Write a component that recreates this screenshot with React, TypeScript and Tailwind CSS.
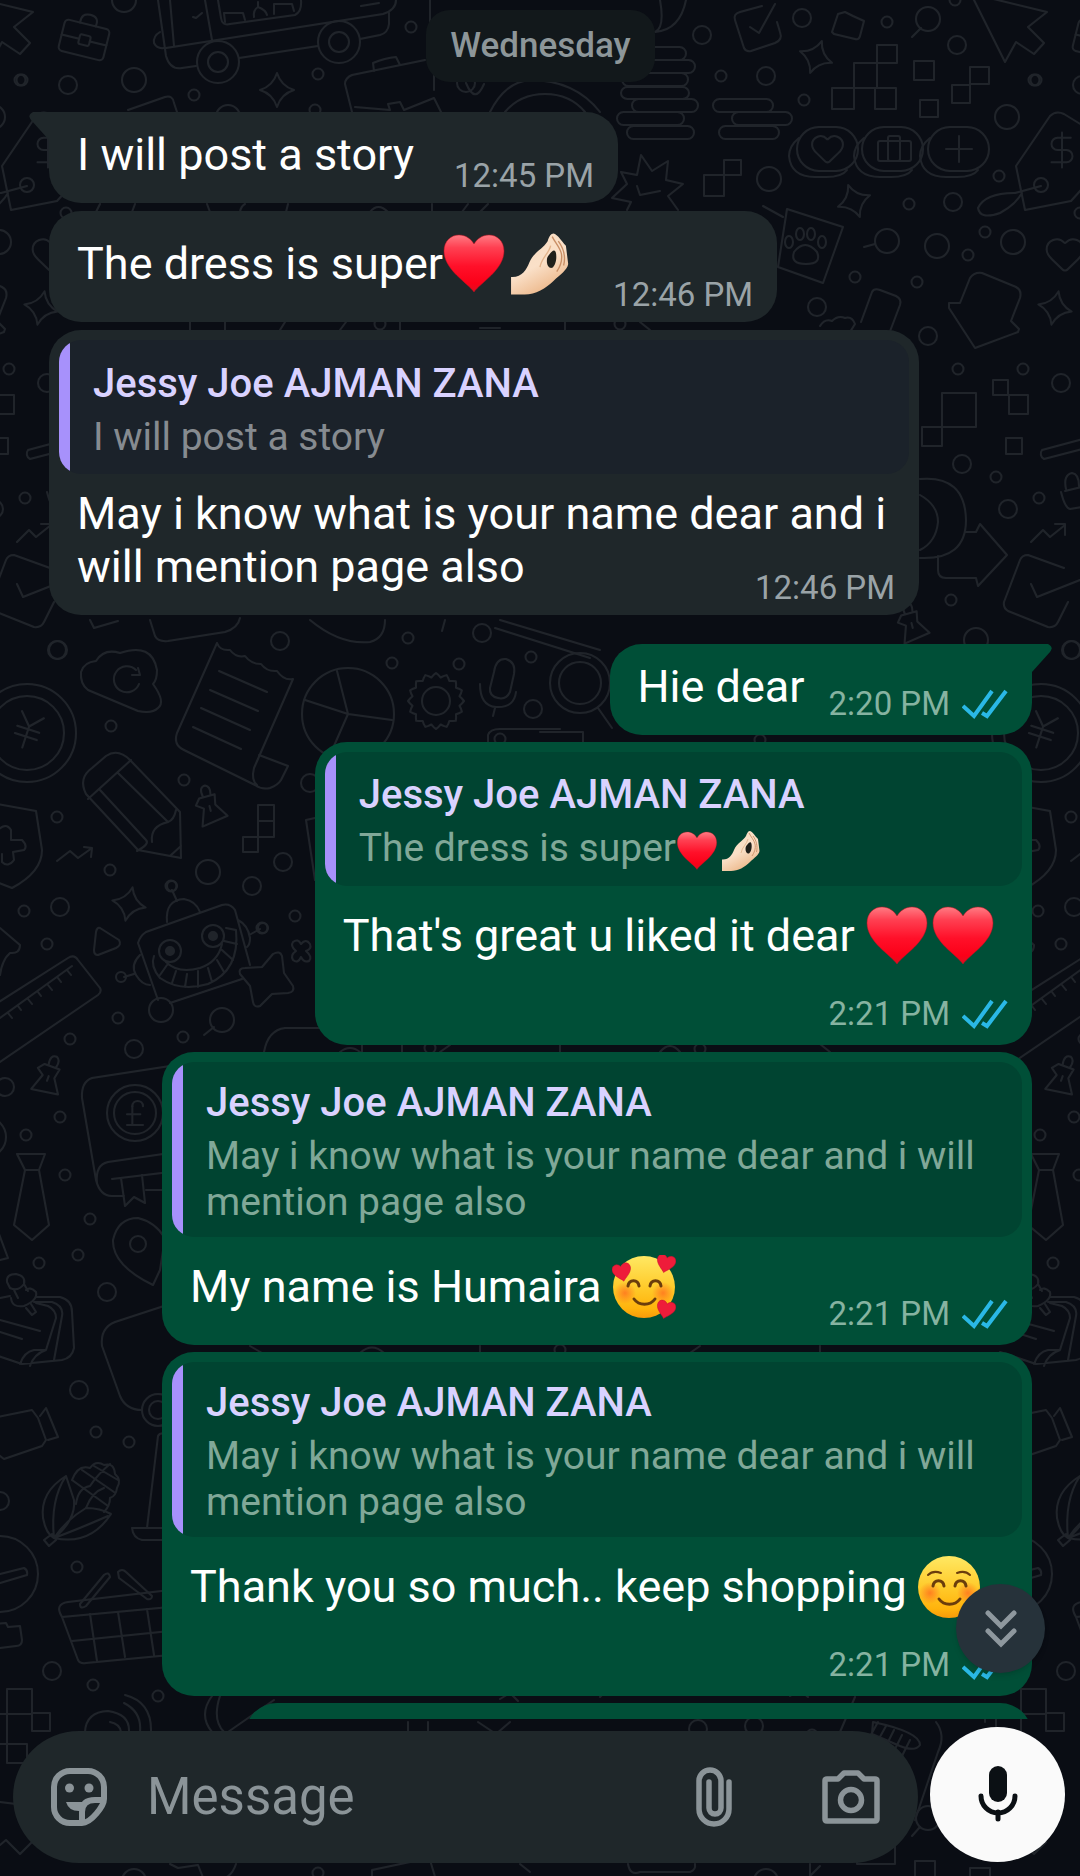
import React from 'react';
import { clsx } from 'clsx';
import { DollarSign, Heart, JapaneseYen, PoundSterling } from 'lucide-react';

type EmojiName = 'heart' | 'hand' | 'hearts-face' | 'smile';

interface Quote {
  author: string;
  text: string;
  emojis?: EmojiName[];
}

interface Message {
  id: number;
  text: string;
  time: string;
  emojis?: EmojiName[];
  quote?: Quote;
  mine?: boolean;
  tail?: boolean;
  // where the time goes: beside the text, over its last line, or on its own line
  meta: 'inline' | 'overlap' | 'below';
}

const CONTACT = 'Jessy Joe AJMAN ZANA';
const LONG_QUOTE = 'May i know what is your name dear and i will mention page also';

const received: Message[] = [
  { id: 1, text: 'I will post a story', time: '12:45 PM', tail: true, meta: 'inline' },
  { id: 2, text: 'The dress is super', emojis: ['heart', 'hand'], time: '12:46 PM', meta: 'inline' },
  {
    id: 3,
    text: 'May i know what is your name dear and i will mention page also',
    time: '12:46 PM',
    quote: { author: CONTACT, text: 'I will post a story' },
    meta: 'overlap',
  },
];

const sent: Message[] = [
  { id: 4, text: 'Hie dear', time: '2:20 PM', mine: true, tail: true, meta: 'inline' },
  {
    id: 5,
    text: "That's great u liked it dear ",
    emojis: ['heart', 'heart'],
    time: '2:21 PM',
    quote: { author: CONTACT, text: 'The dress is super', emojis: ['heart', 'hand'] },
    mine: true,
    meta: 'below',
  },
  {
    id: 6,
    text: 'My name is Humaira ',
    emojis: ['hearts-face'],
    time: '2:21 PM',
    quote: { author: CONTACT, text: LONG_QUOTE },
    mine: true,
    meta: 'overlap',
  },
  {
    id: 7,
    text: 'Thank you so much.. keep shopping ',
    emojis: ['smile'],
    time: '2:21 PM',
    quote: { author: CONTACT, text: LONG_QUOTE },
    mine: true,
    meta: 'below',
  },
];

/* ---------- Emojis ---------- */

const HEART = 'M32 60C26 51 2 38 2 19C2 9 9 3 17 3C24 3 29 7 32 12C35 7 40 3 47 3C55 3 62 9 62 19C62 38 38 51 32 60Z';

const EmojiDefs = () => (
  <svg className="absolute size-0" aria-hidden="true">
    <defs>
      <linearGradient id="heartFill" x1="0" y1="0" x2="0" y2="1">
        <stop offset="0" stopColor="#ff7c84" />
        <stop offset="0.22" stopColor="#ff4052" />
        <stop offset="0.55" stopColor="#ff1029" />
        <stop offset="0.85" stopColor="#fb0018" />
        <stop offset="1" stopColor="#dd0f20" />
      </linearGradient>
      <linearGradient id="skinFill" x1="0" y1="0" x2="0.5" y2="1">
        <stop offset="0" stopColor="#f9dcc0" />
        <stop offset="0.6" stopColor="#fae0c8" />
        <stop offset="1" stopColor="#edb98c" />
      </linearGradient>
      <linearGradient id="faceFill" x1="0" y1="0" x2="0" y2="1">
        <stop offset="0" stopColor="#ffe863" />
        <stop offset="0.5" stopColor="#ffcb2b" />
        <stop offset="0.85" stopColor="#ffb30c" />
        <stop offset="1" stopColor="#f79a0a" />
      </linearGradient>
      <radialGradient id="blush">
        <stop offset="0" stopColor="#ff6a1f" stopOpacity="0.75" />
        <stop offset="1" stopColor="#ff6a1f" stopOpacity="0" />
      </radialGradient>
    </defs>
  </svg>
);

const Emoji = ({ name, className }: { name: EmojiName; className?: string }) => {
  if (name === 'heart') {
    return (
      <svg viewBox="0 0 64 64" className={className} role="img" aria-label="❤️">
        <path d={HEART} fill="url(#heartFill)" stroke="#c4101f" strokeOpacity="0.5" />
      </svg>
    );
  }
  if (name === 'hand') {
    return (
      <svg viewBox="0 0 40 42" className={className} role="img" aria-label="👌🏻">
        <path
          d="M1 29.500C8 30 11 25 13 20C16 13 22 11 25 6C26 3 27 1 29 1C32 2 34 6 37 9L38.500 21C38 25 33 28 29 32C24 37 17 41 10 41H1Z"
          fill="url(#skinFill)"
        />
        <path d="M26 15C28 12 30 11 30.500 14C31.200 18 30 22 28 23.500C26 24 24.500 22 24.500 19C24.500 17 25 16 26 15Z" fill="#1f201b" />
        <path d="M28 3C30 7 33 10 34 14C35 19 33 23 31 26M32 6C35 10 37 16 35.500 22" fill="none" stroke="#c98f66" strokeWidth="0.900" />
        <path d="M27 9C26 14 21 17 20 23" fill="none" stroke="#e3b48c" strokeWidth="0.900" />
      </svg>
    );
  }
  return (
    <svg viewBox="0 0 64 64" className={className} role="img" aria-label={name === 'smile' ? '☺️' : '🥰'}>
      <circle cx="32" cy="32" r="31" fill="url(#faceFill)" />
      <circle cx="13" cy="38" r="11" fill="url(#blush)" />
      <circle cx="51" cy="38" r="11" fill="url(#blush)" />
      <g fill="none" stroke="#6b3d0c" strokeLinecap="round">
        <path d="M16 31C17 24 26 24 27 31M38 31C39 24 48 24 49 31" strokeWidth="3" />
        <path d="M22 44C27 51 38 51 43 44" strokeWidth="3" />
        {name === 'smile' && <path d="M11 20Q16 15 24 18M53 20Q48 15 40 18" strokeWidth="2" />}
      </g>
      {name === 'hearts-face' && (
        <g fill="#ee1c3a" stroke="#c80f2c" strokeWidth="1.500">
          <path d={HEART} transform="translate(0 8) rotate(-12 9 9) scale(.31)" />
          <path d={HEART} transform="translate(44 -1) rotate(14 9 9) scale(.31)" />
          <path d={HEART} transform="translate(44 45) rotate(14 9 9) scale(.31)" />
        </g>
      )}
    </svg>
  );
};

/* ---------- Wallpaper ---------- */

const TILE = 1014;
const INK = '#20242a';

const SMALL_DOTS = [
  [22, 80], [194, 95], [318, 74], [411, 27], [315, 110], [887, 22], [721, 76], [804, 100], [999, 176], [1034, 80],
  [909, 204], [985, 232], [968, 255], [855, 277], [917, 282], [955, 0], [66, 213], [958, 369], [1023, 369], [996, 477],
  [1039, 498], [951, 600], [111, 726], [184, 780], [57, 817], [110, 870], [24, 911], [47, 944], [118, 1018], [70, 1039],
  [183, 1037], [408, 638], [392, 663], [459, 664], [295, 916], [171, 886], [262, 928], [531, 657], [60, 1117],
  [26, 1135], [65, 1175], [90, 1219], [78, 1255], [39, 1263], [96, 1432], [129, 1442], [77, 1567], [158, 1696],
  [93, 1685], [380, 324], [620, 324], [500, 739], [760, 740], [430, 1048], [700, 1049], [560, 1350], [318, 1873], [812, 1735],
];

const MEDIUM_DOTS = [
  [68, 85], [466, 83], [702, 35], [802, 18], [766, 76], [957, 45], [953, 202], [817, 307], [928, 336], [1061, 383],
  [962, 464], [1008, 509], [1071, 650], [58, 650], [280, 641], [283, 862], [252, 886], [60, 907], [134, 1049],
  [482, 633], [533, 709], [5, 1087], [107, 1292], [79, 1390], [0, 1501], [52, 1671], [310, 783], [698, 1729], [754, 1726],
];

const LARGE_DOTS = [
  [134, 80], [124, 0], [228, 117], [1007, 117], [769, 179], [937, 246], [1013, 242], [887, 241], [928, 19], [976, 640],
  [208, 872], [222, 1020], [161, 1010], [928, 1818], [134, 1881], [766, 1881],
];

// x, y, width, height
const BLOCKS = [
  [877, 45, 20, 18], [854, 63, 23, 25], [832, 88, 22, 21], [875, 88, 21, 21], [914, 61, 20, 19], [970, 67, 19, 17],
  [952, 85, 18, 18], [920, 100, 18, 17], [724, 160, 17, 15], [704, 175, 20, 21], [942, 393, 34, 34], [922, 427, 20, 19],
  [993, 380, 15, 15], [1009, 395, 19, 19], [1006, 438, 16, 16], [258, 805, 16, 16], [258, 821, 16, 16],
  [243, 837, 15, 15], [7, 1689, 25, 25], [32, 1713, 18, 18], [-18, 1714, 25, 30], [7, 1744, 20, 19],
  [857, 1840, 38, 24], [915, 1861, 20, 30], [970, 1868, 20, 20],
];

const PILLS = [
  [618, 47, 68, 13], [625, 60, 70, 13], [622, 73, 66, 13], [621, 87, 68, 12], [632, 99, 66, 13], [617, 112, 67, 13],
  [627, 126, 67, 13], [713, 99, 60, 13], [732, 112, 60, 13], [719, 126, 60, 13],
];

// x, y, rotation
const SPARKLES = [
  [277, 90, 0], [816, 57, 20], [854, 201, -20], [1055, 308, 12], [129, 904, 12],
];

const PUSHPINS = [
  [210, 808, -15], [912, 625, -15], [48, 1078, 20],
];

const LINES = [
  // shop truck
  'M158 0L166 56Q170 70 182 68L196 66M239 58L318 46M360 39L380 35Q388 33 389 24V13M166 48L383 14Q396 10 396 0M205 0L212 40M170 0L174 46M218 0L221 18Q222 26 230 24L295 15Q302 12 301 0',
  'M160 32Q153 36 154 43Q157 49 164 48M193 17L196 18L202 13M225 22L224 13H243L245 20M254 17Q253 10 258 7V2M258 7Q266 10 267 15M274 14V4H292L294 11M361 6L379 3',
  // suitcase
  'M352 112L345 84Q345 78 352 75L425 60M374 71L373 63Q385 58 396 57L400 65M355 107L390 110L388 104L400 102L404 110L434 98L441 112M434 60V90',
  'M128 110L165 97Q173 95 174 103L177 112M490 112Q505 82 530 80Q575 80 600 112M505 112Q520 94 545 94Q570 94 585 112M466 83Q475 105 484 84M430 0V50M660 0Q665 28 655 32Q680 30 686 0',
  // cursor
  'M973 -2L1005 62L1016 42L1034 54L1044 43L1028 27L1047 12L973 -6Z',
  // check box
  'M762 6L740 12Q733 14 735 20L744 48Q746 52 751 51L775 43Q783 40 780 32L777 22M750 27L759 33L775 4',
  'M832 32L838 14L845 12L853 16L864 21L860 36Q859 40 855 39L834 34Z',
  'M921 28L912 37M875 244L864 247M214 1027L204 1035M920 1827L912 1836',
  // price tag
  'M1016 166L1050 116Q1056 110 1064 114L1090 130V180L1071 201L1025 210ZM1048 185A7 7 0 1 0 1034 185A7 7 0 1 0 1048 185M1041 186L1015 193Q985 193 978 208Q980 220 1000 213Q1015 205 1022 193',
  // burst
  'M627 210L631 202L612 198L627 184L621 172L637 175L641 155L652 171L668 161L666 180L683 184L668 196L678 210M637 186L640 195L660 191',
  // paw card
  'M787 209L843 227L823 283L778 267ZM763 206L783 217M794 252Q805 238 817 252Q822 264 806 264Q790 264 794 252',
  'M861 322L872 292Q874 288 880 290L896 296Q902 299 900 305L889 334M820 326Q825 318 832 321Q838 315 845 318Q852 316 855 324L850 332',
  'M949 303L960 303L970 278Q974 272 982 273L1016 287Q1022 290 1020 298L1011 321L1019 329L1018 332L975 348L949 308Z',
  // magnet and sign
  'M920 479Q965 475 966 520Q966 560 920 558M920 495Q938 505 938 522Q936 542 920 550M938 556V570Q938 578 946 578H976L978 586L1007 555L980 524L976 532H966',
  'M1098 435L1042 450A6 6 0 0 0 1044 459L1098 445M1065 491L1094 484V505L1070 509Q1065 508 1061 492M1066 489Q1063 475 1072 473Q1079 474 1079 486',
  'M1031 542L1043 530L1050 537L1065 525M1055 524H1065V535M57 861L70 851L78 858L92 848M84 847L92 848L91 857',
  'M1064 568L1028 555Q1022 555 1020 560L1004 602Q1003 608 1008 611L1048 627Q1055 628 1058 622L1068 602M1031 584L1037 597L1080 580',
  'M150 620L155 636Q158 642 168 641L225 632Q238 628 240 618M310 620Q340 645 370 642Q385 638 385 620M445 620L442 631M500 620L600 650M495 628L590 658M90 620L94 628L118 621',
  // magnifier
  'M598 708L612 728M540 732H583V742M488 742V735Q490 729 500 729H560',
  // cloud
  'M88 690Q80 684 81 672Q84 662 96 661Q104 648 120 653Q152 642 157 670Q157 680 153 684Q166 702 158 708Q152 714 138 711ZM139 684A13 13 0 1 1 136 670M138 668L140 675L132 675',
  // receipt
  'M217 643Q220 651 230 650Q236 658 245 656Q251 664 261 664Q267 672 277 671Q284 681 293 679L254 768Q251 780 257 785M217 643L177 733Q173 745 184 750L255 785Q262 790 270 788Q278 785 281 780L288 766L259 755M219 671L267 692M210 690L258 711M201 708L250 730M193 727L241 749',
  'M348 714L337 671M348 714L305 700M348 714L392 720M348 714L330 755',
  // microphone
  'M494 672Q496 658 506 659Q516 662 514 674L510 692Q506 700 498 698Q489 696 490 688ZM480 684Q480 706 496 707Q514 708 516 692M495 708L493 716',
  // pencil
  'M86 794Q78 778 92 768L106 756Q118 748 130 760L180 812L181 858L138 850ZM88 799L131 760M100 790L146 840Q150 844 137 851M118 773L168 822Q174 820 176 810M168 822Q150 826 152 842M170 856L181 846',
  // shield
  'M-8 803L36 811L42 850Q42 872 12 888L-14 878M-2 830Q6 822 11 830V840H22Q28 846 24 850L13 852L14 860Q8 868 2 862V854',
  'M100 928L119 940Q122 945 116 948L98 955Q94 955 94 950L96 932Q97 927 100 928Z',
  'M0 928L20 945Q20 954 10 953Q2 960 0 975M-20 1014L68 958Q74 954 78 960L100 988Q102 992 98 995L0 1062M0 1018L72 966M8 1013L12 1018M18 1006L21 1010M28 999L32 1004M38 992L41 996M48 985L52 990M58 978L61 982M67 970L71 975',
  // robot
  'M146 932L222 905Q230 903 235 910L250 965M138 943Q140 936 146 932M138 943L158 1000M170 1003L242 979M172 890L177 901M167 922Q165 900 184 899Q196 901 200 912M140 955Q130 965 136 975Q142 985 150 985M134 974L124 977M238 920Q248 925 250 938Q250 945 247 947M251 934L260 929',
  'M154 956Q150 966 160 978Q180 992 208 984Q240 970 236 930L226 928M166 962Q178 974 200 968Q218 962 222 944M160 975L167 965M172 983L176 971M185 987L187 974M198 987L198 971M212 982L208 968M224 972L217 960M233 960L222 950M237 944L224 941',
  'M273 954Q280 950 282 956L284 973L293 986Q295 992 288 993L272 994L260 1006Q254 1008 253 1002L250 986L240 974Q238 968 245 968L262 967Z',
  'M293 942Q298 938 301 944Q306 938 310 944Q312 949 306 951Q313 957 309 961Q304 963 301 957Q298 964 293 960Q290 955 296 951Q290 946 293 942Z',
  'M306 820L315 818M306 820L315 880M264 1052Q268 1030 285 1028H320M362 1044V1052M402 1044V1052',
  // cash book
  'M170 1066L92 1078Q81 1082 82 1098L96 1180Q100 1196 112 1196H124M170 1153L108 1162Q95 1165 97 1183M112 1179L170 1172M121 1178L125 1206L134 1197L145 1203L142 1175M146 1190H170',
  // tie
  'M17 1154H45L39 1170H25ZM25 1170L14 1225L32 1240L49 1225L39 1170',
  'M153 1285Q112 1265 113 1240Q118 1218 138 1218Q155 1222 165 1238L160 1270ZM-10 1210L8 1258L0 1260',
  // notes with a pin
  'M0 1298L10 1296M36 1297H60Q72 1300 72 1312L74 1348Q72 1358 62 1360L22 1364L-14 1352M34 1302H52Q64 1306 62 1316L54 1360M20 1364Q24 1352 34 1350L46 1350L56 1318Q56 1310 48 1306L36 1303M0 1320L40 1331M0 1332L22 1339M46 1350Q34 1354 30 1366',
  'M7 1282Q6 1274 16 1274Q26 1276 24 1284Q18 1292 10 1288ZM14 1290L18 1298M24 1284L28 1291M11 1298Q12 1308 24 1306Q38 1300 36 1292Q30 1286 26 1290M26 1308L32 1315L36 1312L31 1304',
  // map corner and lamp
  'M170 1304L115 1322Q100 1328 102 1346L120 1396Q126 1410 142 1410M158 1436L147 1528M132 1528H165M132 1528Q133 1538 142 1540H165M147 1528L158 1436Q160 1432 168 1434',
  // video camera
  'M-8 1418L32 1410L38 1418L46 1440L42 1446L4 1459L-8 1450M40 1416L46 1408L58 1437L48 1440',
  // corn
  'M66 1476Q40 1492 43 1518Q46 1534 54 1538Q76 1520 74 1500ZM66 1476Q50 1500 54 1538Q90 1546 111 1514Q100 1508 86 1508Q66 1520 54 1538Q76 1530 108 1516M44 1540L52 1534L56 1540L49 1546Z',
  'M72 1480Q78 1464 90 1468Q96 1460 104 1465Q114 1462 115 1474Q122 1480 117 1488Q116 1496 110 1498Q110 1506 104 1512M72 1480L108 1506M82 1470L114 1492M94 1466L118 1480M76 1504Q78 1488 90 1486Q98 1474 110 1464M86 1508Q92 1492 104 1488',
  // circle sign and folder
  'M0 1574L24 1568Q28 1570 27 1575L0 1583M-5 1624L6 1623L8 1627L20 1626L22 1640Q22 1646 16 1646L0 1648',
  // basket
  'M62 1617Q54 1604 68 1602L170 1590M62 1617L170 1607M62 1617L78 1660Q80 1664 86 1663L170 1655M90 1614L97 1661M118 1612L125 1657M147 1609L154 1655M72 1641L170 1631',
  'M80 1604L104 1575Q109 1571 110 1577L86 1606Q80 1610 80 1604M118 1572Q122 1568 126 1572L152 1596Q152 1600 147 1599L119 1578Z',
  // speaker arcs
  'M85 1732Q86 1712 108 1711Q130 1714 129 1732M110 1722Q120 1724 121 1732M124 1703Q142 1712 140 1732M125 1695Q152 1702 151 1732M212 1696Q198 1715 212 1732M220 1696Q212 1720 224 1732M228 1732L274 1700M0 1802L16 1804M0 1845L6 1840L20 1854L32 1842',
  'M170 1864L178 1868L198 1865L204 1880M236 1864Q230 1882 212 1880M372 1870L410 1862M372 1870V1880M430 1860L436 1880M520 1864L530 1872M408 1722V1732M428 1722V1732M478 1722L496 1734L510 1722M500 1699L510 1693L518 1701',
  // brush
  'M873 1722Q920 1732 920 1745Q915 1752 900 1746L872 1734ZM878 1722L868 1740M886 1726L876 1744M894 1730L884 1750M902 1735L892 1755M910 1740L900 1760M936 1722Q946 1735 938 1752L915 1820M600 1697L606 1690M790 1696L800 1690L808 1697M840 1732L855 1697M985 1722V1716M628 1864Q630 1876 640 1872H690Q696 1870 695 1864M810 1864V1876L820 1866',
  'M100 204L96 212M135 204L132 212M207 204L210 212M240 212Q241 206 245 204M288 204L286 212M370 212Q378 202 388 212M432 204V212M468 204L462 212M488 204L480 212',
  'M190 322V330M225 322V330M280 330L285 322M340 330L346 322M400 322V330M480 328H500M565 330V322M640 322L650 330M340 1052Q350 1044 360 1052M440 1052L450 1045M560 1044V1052M660 1052Q670 1040 680 1052M820 1044L830 1052M250 1346L262 1353M360 1353Q372 1342 384 1353M480 1346V1353M690 1353L700 1346M820 1346V1353',
];

// scalloped outline of the gear
const gearPoints = Array.from({ length: 64 }, (_, i) => {
  const angle = (i / 64) * Math.PI * 2;
  const r = 26 + Math.cos(i * Math.PI / 2) * 2;
  return `${(436 + r * Math.cos(angle)).toFixed(1)},${(701 + r * Math.sin(angle)).toFixed(1)}`;
}).join(' ');

const Doodles = () => (
  <g id="doodles">
    {SMALL_DOTS.map(([x, y], i) => <circle key={i} cx={x} cy={y} r="5.5" />)}
    {MEDIUM_DOTS.map(([x, y], i) => <circle key={i} cx={x} cy={y} r="9" />)}
    {LARGE_DOTS.map(([x, y], i) => <circle key={i} cx={x} cy={y} r="12" />)}
    {BLOCKS.map(([x, y, w, h], i) => <rect key={i} x={x} y={y} width={w} height={h} />)}
    {PILLS.map(([x, y, w, h], i) => <rect key={i} x={x} y={y} width={w} height={h} rx="6.5" />)}
    {SPARKLES.map(([x, y, r], i) => (
      <path key={i} d="M0-17Q4-4 17 0Q4 4 0 17Q-4 4-17 0Q-4-4 0-17Z" transform={`translate(${x} ${y}) rotate(${r})`} />
    ))}
    {PUSHPINS.map(([x, y, r], i) => (
      <path
        key={i}
        d="M-8-12L8-12L6-2L15 12L-12 16L-6-1L-13-6ZM-4-13Q-6-23 1-23Q6-21 4-13M0-2V3"
        transform={`translate(${x} ${y}) rotate(${r})`}
      />
    ))}
    {LINES.map((d, i) => <path key={i} d={d} />)}

    {/* small briefcase */}
    <g transform="rotate(14 84 40)">
      <rect x="61" y="24" width="46" height="32" rx="4" />
      <rect x="79" y="35" width="11" height="10" rx="2" />
      <path d="M61 40H79M90 40H107M76 24Q75 14 84 14Q94 14 92 24" />
    </g>
    {/* truck wheels */}
    <circle cx="218" cy="62" r="21" />
    <circle cx="218" cy="62" r="10" />
    <circle cx="339" cy="42" r="21" />
    <circle cx="339" cy="42" r="10" />
    {/* tokens */}
    {[0, 65, 131].map((dx) => (
      <g key={dx} transform={`translate(${dx} 0)`}>
        <rect x="797" y="127" width="61" height="44" rx="22" />
        <path d="M799 138Q789 146 789 156Q791 177 815 177H826Q842 177 847 170" />
      </g>
    ))}
    <Heart x="809" y="130" width="37" height="37" color={INK} strokeWidth="1.3" />
    <rect x="878" y="141" width="33" height="20" rx="2" />
    <rect x="888" y="136" width="12" height="25" rx="2" />
    <path d="M946 149H972M959 136V162" />
    <ellipse cx="789" cy="242" rx="4" ry="6" />
    <ellipse cx="800" cy="234" rx="4" ry="6" />
    <ellipse cx="811" cy="234" rx="4" ry="6" />
    <ellipse cx="822" cy="242" rx="4" ry="6" />
    <DollarSign x="1041" y="129" width="42" height="42" color={INK} strokeWidth="1.1" />
    <Heart x="1041" y="232" width="48" height="44" color={INK} strokeWidth="1.1" />
    {/* coins */}
    <circle cx="27" cy="733" r="49" />
    <circle cx="27" cy="733" r="37" />
    <g transform="rotate(18 27 733)">
      <JapaneseYen x="4" y="708" width="46" height="46" color={INK} strokeWidth="1.1" />
    </g>
    <circle cx="135" cy="1113" r="28" />
    <circle cx="135" cy="1113" r="21" />
    <PoundSterling x="119" y="1097" width="32" height="32" color={INK} strokeWidth="1.5" />
    <circle cx="348" cy="714" r="46" />
    <polygon points={gearPoints} />
    <circle cx="436" cy="701" r="14" />
    <circle cx="580" cy="683" r="30" />
    <circle cx="580" cy="683" r="21" />
    {/* robot eyes and joints */}
    <circle cx="170" cy="951" r="11" />
    <circle cx="213" cy="936" r="11" />
    <circle cx="170" cy="951" r="4" fill={INK} />
    <circle cx="213" cy="936" r="4" fill={INK} />
    <circle cx="172" cy="886" r="5" />
    <circle cx="121" cy="977" r="5" />
    <circle cx="263" cy="928" r="5" />
    <circle cx="138" cy="1244" r="8" />
    <circle cx="158" cy="1410" r="16" />
    <circle cx="158" cy="1410" r="9" />
    <circle cx="0" cy="1574" r="38" />
    <circle cx="-14" cy="1137" r="20" />
  </g>
);

const Wallpaper = () => (
  <svg className="absolute inset-0 size-full" aria-hidden="true">
    <defs>
      <pattern id="wallpaper" width={TILE} height="1900" patternUnits="userSpaceOnUse">
        <g fill="none" stroke={INK} strokeWidth="2" strokeLinejoin="round" strokeLinecap="round">
          <Doodles />
          <use href="#doodles" x={-TILE} />
          <use href="#doodles" x={TILE} />
        </g>
      </pattern>
    </defs>
    <rect width="100%" height="100%" fill="url(#wallpaper)" />
  </svg>
);

/* ---------- Messages ---------- */

const Ticks = () => (
  <svg viewBox="0 0 46 30" className="h-[30px] w-[46px]" fill="none" stroke="#2ab8e6" strokeWidth="4" role="img" aria-label="Read">
    <path d="M1 17L12 27L30 2M20 24L25 27L44 2" />
  </svg>
);

const QuoteBox = ({ quote, mine }: { quote: Quote; mine?: boolean }) => (
  <div className={clsx('mx-2.5 mt-2.5 flex min-h-[134px] overflow-hidden rounded-[22px]', mine ? 'bg-[#004431]' : 'bg-[#1b222a]')}>
    <div className="w-[11px] shrink-0 bg-[#a791fb]" />
    <div className="flex flex-col justify-center px-[23px] pt-[15px] pb-3">
      <div className="text-[40px]/[52px] font-medium text-[#d9d2ff]">{quote.author}</div>
      <div className={clsx('mt-1 text-[39px]/[46px]', mine ? 'text-[#80a898]' : 'text-[#868b90]')}>
        {quote.text}
        {quote.emojis?.map((name, i) => (
          <Emoji key={i} name={name} className="mr-0.5 inline-block size-[42px] align-middle" />
        ))}
      </div>
    </div>
  </div>
);

const Tail = ({ mine }: { mine?: boolean }) => (
  <svg
    viewBox="0 0 20 28"
    className={clsx('absolute top-0 h-7 w-5', mine ? '-right-5 fill-[#004f37]' : '-left-5 -scale-x-100 fill-[#1f272a]')}
    aria-hidden="true"
  >
    <path d="M0 0H16Q22 3 18 8L0 28Z" />
  </svg>
);

const Bubble = ({ message }: { message: Message }) => {
  const { text, emojis, time, quote, mine, tail, meta } = message;

  return (
    <div
      className={clsx(
        'relative w-fit max-w-[870px] rounded-[32px]',
        mine ? 'self-end bg-[#004f37]' : 'self-start bg-[#1f272a]',
        tail && (mine ? 'rounded-tr-none' : 'rounded-tl-none'),
      )}
    >
      {tail && <Tail mine={mine} />}
      {quote && <QuoteBox quote={quote} mine={mine} />}
      <div className={clsx('flex', meta === 'inline' ? 'items-end' : 'flex-col')}>
        <div
          className={clsx(
            'flex items-center pb-[22px] pl-7 text-[45px]/[53px] text-white',
            quote ? 'pt-[13px]' : 'pt-4',
            meta === 'inline' && (mine ? 'pr-6' : 'pr-10'),
            meta === 'overlap' && 'pr-6',
            meta === 'below' && 'pr-9',
          )}
        >
          <p className="whitespace-pre-wrap">{text}</p>
          {emojis && (
            <div className="-ml-0.5 flex shrink-0">
              {emojis.map((name, i) => (
                <span key={i} className="flex h-[73px] w-[66px] items-center justify-center">
                  <Emoji name={name} className="size-16" />
                </span>
              ))}
            </div>
          )}
        </div>
        <div
          className={clsx(
            'flex shrink-0 items-center gap-3 self-end pr-6 text-[33px]/[40px]',
            mine ? 'pb-[11px] text-[#86b3a1]' : 'pb-[7px] text-[#9aa3a7]',
            meta === 'overlap' && (mine ? '-mt-[51px]' : '-mt-[47px]'),
          )}
        >
          <time>{time}</time>
          {mine && <Ticks />}
        </div>
      </div>
    </div>
  );
};

/* ---------- Composer ---------- */

const StickerIcon = () => (
  <svg viewBox="0 0 56 58" className="h-[58px] w-14" fill="none" stroke="currentColor" strokeWidth="6">
    <path d="M19 3H37A16 16 0 0 1 53 19V31C53 38 40 55 31 55H19A16 16 0 0 1 3 39V19A16 16 0 0 1 19 3Z" />
    <path d="M53 32H44Q31 32 31 44V55" />
    <path d="M15 34H36Q31 37 30 43Q18 44 15 34Z" fill="currentColor" stroke="none" />
    <circle cx="18.500" cy="20" r="4.500" fill="currentColor" stroke="none" />
    <circle cx="38" cy="20" r="4.500" fill="currentColor" stroke="none" />
  </svg>
);

const ClipIcon = () => (
  <svg viewBox="0 0 36 60" className="h-[60px] w-9" fill="none" stroke="currentColor" strokeWidth="5.500" strokeLinecap="round">
    <path d="M33 15V42A15 15 0 0 1 3 42V14A11 11 0 0 1 25 14V41A5.500 5.500 0 0 1 13 41V15" />
  </svg>
);

const CameraIcon = () => (
  <svg viewBox="0 0 58 54" className="h-[54px] w-[58px]" fill="none" stroke="currentColor" strokeWidth="5.500" strokeLinejoin="round">
    <path d="M5 9H16L22 3H36L42 9H53Q55 9 55 11V49Q55 51 53 51H5Q3 51 3 49V11Q3 9 5 9Z" />
    <circle cx="29" cy="30" r="10.500" />
  </svg>
);

const MicIcon = () => (
  <svg viewBox="0 0 40 56" className="h-14 w-10" fill="none" stroke="#0b1014" strokeWidth="5" strokeLinecap="round">
    <rect x="11" y="0" width="18" height="36" rx="9" fill="#0b1014" stroke="none" />
    <path d="M3 30A17 17 0 0 0 37 30M20 46V53" />
  </svg>
);

const Composer = () => (
  <form className="flex items-center gap-3 pt-1.5 pr-[15px] pb-[13px] pl-[13px]" onSubmit={(e) => e.preventDefault()}>
    <div className="mt-1.5 flex h-[132px] min-w-0 flex-1 items-center rounded-full bg-[#1f272a] px-[38px] text-[#8b9498]">
      <button type="button" aria-label="Stickers">
        <StickerIcon />
      </button>
      <input
        type="text"
        aria-label="Message"
        placeholder="Message"
        className="ml-10 min-w-0 flex-1 bg-transparent text-[51px]/[60px] text-white outline-none placeholder:text-[#8b9498]"
      />
      <button type="button" aria-label="Attach">
        <ClipIcon />
      </button>
      <button type="button" aria-label="Camera" className="ml-[90px]">
        <CameraIcon />
      </button>
    </div>
    <button type="button" aria-label="Record voice message" className="flex size-[135px] shrink-0 items-center justify-center rounded-full bg-[#fafafa]">
      <MicIcon />
    </button>
  </form>
);

const App = () => (
  <div className="relative flex h-screen flex-col overflow-hidden bg-[#0a0d14] font-[Roboto,'Liberation_Sans',sans-serif]">
    <EmojiDefs />
    <Wallpaper />

    <main className="relative flex min-h-0 flex-1 flex-col overflow-hidden pt-2.5 pr-12 pl-[49px]">
      <div className="mb-[30px] flex h-[72px] shrink-0 items-center self-center rounded-[24px] bg-[#12181b] px-6 text-[35px]/[40px] font-medium text-[#8d9699]">
        Wednesday
      </div>
      <section className="flex shrink-0 flex-col gap-2">
        {received.map((message) => <Bubble key={message.id} message={message} />)}
      </section>
      <section className="mt-[29px] flex shrink-0 flex-col gap-[7px]">
        {sent.map((message) => <Bubble key={message.id} message={message} />)}
        {/* next message, still below the fold */}
        <div className="h-24 w-[787px] self-end rounded-[32px] bg-[#004f37]" />
      </section>

      <button
        type="button"
        aria-label="Scroll to latest"
        className="absolute right-[35px] bottom-[46px] flex size-[89px] items-center justify-center rounded-full bg-[#26323a] shadow-md"
      >
        <svg viewBox="0 0 32 38" className="h-[38px] w-8" fill="none" stroke="#8e989e" strokeWidth="5" strokeLinecap="round">
          <path d="M3 3L16 16L29 3M3 21L16 34L29 21" />
        </svg>
      </button>
    </main>

    <div className="relative">
      <Composer />
    </div>
  </div>
);

export default App;
